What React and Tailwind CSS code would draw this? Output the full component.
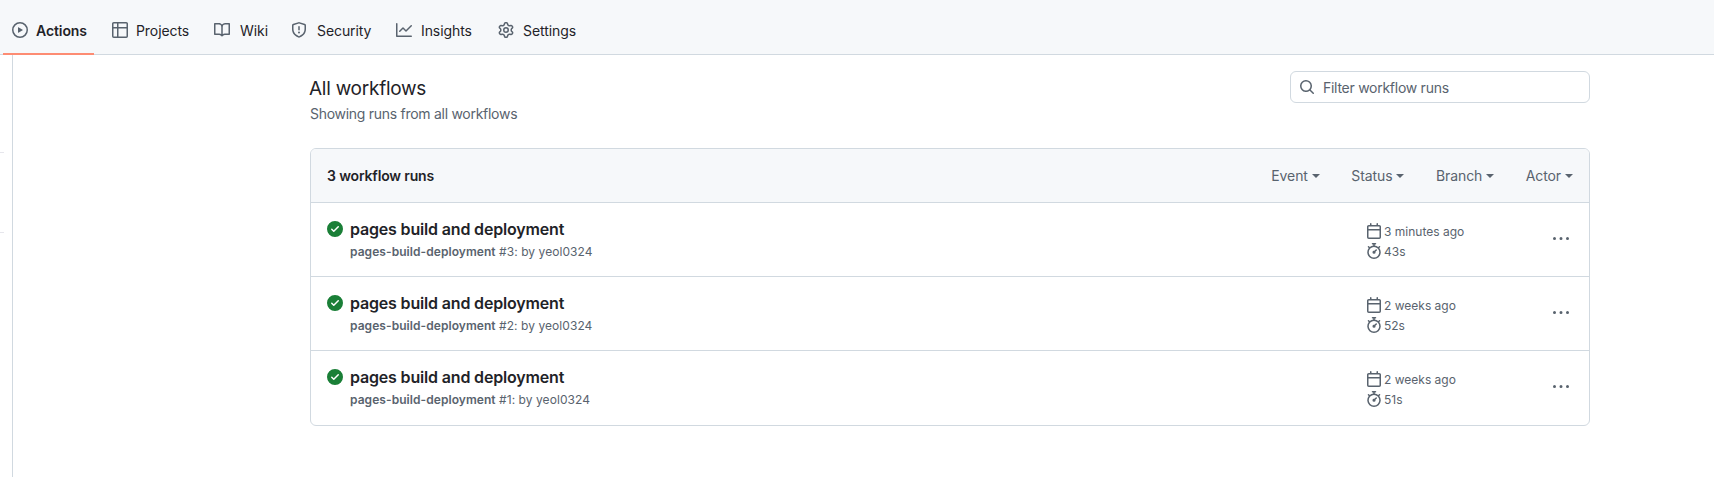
const paths = {
  play: 'M8 0a8 8 0 1 1 0 16A8 8 0 0 1 8 0ZM1.5 8a6.5 6.5 0 1 0 13 0 6.5 6.5 0 0 0-13 0Zm4.879-2.773 4.264 2.559a.25.25 0 0 1 0 .428l-4.264 2.559A.25.25 0 0 1 6 10.559V5.442a.25.25 0 0 1 .379-.215Z',
  table: 'M0 1.75C0 .784.784 0 1.75 0h12.5C15.216 0 16 .784 16 1.75v12.5A1.75 1.75 0 0 1 14.25 16H1.75A1.75 1.75 0 0 1 0 14.25ZM6.5 6.5v8h7.75a.25.25 0 0 0 .25-.25V6.5Zm8-1.5V1.75a.25.25 0 0 0-.25-.25H6.5V5Zm-13 1.5v7.75c0 .138.112.25.25.25H5v-8ZM5 5V1.5H1.75a.25.25 0 0 0-.25.25V5Z',
  book: 'M0 1.75A.75.75 0 0 1 .75 1h4.253c1.227 0 2.317.59 3 1.501A3.743 3.743 0 0 1 11.006 1h4.245a.75.75 0 0 1 .75.75v10.5a.75.75 0 0 1-.75.75h-4.507a2.25 2.25 0 0 0-1.591.659l-.622.621a.75.75 0 0 1-1.06 0l-.622-.621A2.25 2.25 0 0 0 5.258 13H.75a.75.75 0 0 1-.75-.75Zm7.251 10.324.004-5.073-.002-2.253A2.25 2.25 0 0 0 5.003 2.5H1.5v9h3.757a3.75 3.75 0 0 1 1.994.574ZM8.755 4.75l-.004 7.322a3.752 3.752 0 0 1 1.992-.572H14.5v-9h-3.495a2.25 2.25 0 0 0-2.25 2.25Z',
  shield: 'M7.467.133a1.748 1.748 0 0 1 1.066 0l5.25 1.68A1.75 1.75 0 0 1 15 3.48V7c0 1.566-.32 3.182-1.303 4.682-.983 1.498-2.585 2.813-5.032 3.855a1.697 1.697 0 0 1-1.33 0c-2.447-1.042-4.049-2.357-5.032-3.855C1.32 10.182 1 8.566 1 7V3.48a1.75 1.75 0 0 1 1.217-1.667Zm.61 1.429a.25.25 0 0 0-.153 0l-5.25 1.68a.25.25 0 0 0-.174.238V7c0 1.358.275 2.666 1.057 3.86.784 1.194 2.121 2.34 4.366 3.297a.196.196 0 0 0 .154 0c2.245-.956 3.582-2.104 4.366-3.298C13.225 9.666 13.5 8.36 13.5 7V3.48a.251.251 0 0 0-.174-.237l-5.25-1.68ZM8.75 4.75v3a.75.75 0 0 1-1.5 0v-3a.75.75 0 0 1 1.5 0ZM9 10.5a1 1 0 1 1-2 0 1 1 0 0 1 2 0Z',
  graph: 'M1.5 1.75V13.5h13.75a.75.75 0 0 1 0 1.5H.75a.75.75 0 0 1-.75-.75V1.75a.75.75 0 0 1 1.5 0Zm14.28 2.53-5.25 5.25a.75.75 0 0 1-1.06 0L7 7.06 4.28 9.78a.751.751 0 0 1-1.042-.018.751.751 0 0 1-.018-1.042l3.25-3.25a.75.75 0 0 1 1.06 0L10 7.94l4.72-4.72a.751.751 0 0 1 1.042.018.751.751 0 0 1 .018 1.042Z',
  gear: 'M8 0a8.2 8.2 0 0 1 .701.031C9.444.095 9.99.645 10.16 1.29l.288 1.107c.018.066.079.158.212.224.231.114.454.243.668.386.123.082.233.09.299.071l1.103-.303c.644-.176 1.392.021 1.82.63.27.385.506.792.704 1.218.315.675.111 1.422-.364 1.891l-.814.806c-.049.048-.098.147-.088.294.016.257.016.515 0 .772-.01.147.038.246.088.294l.814.806c.475.469.679 1.216.364 1.891a7.977 7.977 0 0 1-.704 1.217c-.428.61-1.176.807-1.82.63l-1.102-.302c-.067-.019-.177-.011-.3.071a5.909 5.909 0 0 1-.668.386c-.133.066-.194.158-.211.224l-.29 1.106c-.168.646-.715 1.196-1.458 1.26a8.006 8.006 0 0 1-1.402 0c-.743-.064-1.289-.614-1.458-1.26l-.289-1.106c-.018-.066-.079-.158-.212-.224a5.738 5.738 0 0 1-.668-.386c-.123-.082-.233-.09-.299-.071l-1.103.303c-.644.176-1.392-.021-1.82-.63a8.12 8.12 0 0 1-.704-1.218c-.315-.675-.111-1.422.363-1.891l.815-.806c.05-.048.098-.147.088-.294a6.214 6.214 0 0 1 0-.772c.01-.147-.038-.246-.088-.294l-.815-.806C.635 6.045.431 5.298.746 4.623a7.92 7.92 0 0 1 .704-1.217c.428-.61 1.176-.807 1.82-.63l1.102.302c.067.019.177.011.3-.071.214-.143.437-.272.668-.386.133-.066.194-.158.211-.224l.29-1.106C6.009.645 6.556.095 7.299.03 7.53.01 7.764 0 8 0Zm-.571 1.525c-.036.003-.108.036-.137.146l-.289 1.105c-.147.561-.549.967-.998 1.189-.173.086-.34.183-.5.29-.417.278-.97.423-1.529.27l-1.103-.303c-.109-.03-.175.016-.195.045-.22.312-.412.644-.573.99-.014.031-.021.11.059.19l.815.806c.411.406.562.957.53 1.456a4.709 4.709 0 0 0 0 .582c.032.499-.119 1.05-.53 1.456l-.815.806c-.081.08-.073.159-.059.19.162.346.353.677.573.989.02.03.085.076.195.046l1.102-.303c.56-.153 1.113-.008 1.53.27.161.107.328.204.501.29.447.222.85.629.997 1.189l.289 1.105c.029.109.101.143.137.146a6.6 6.6 0 0 0 1.142 0c.036-.003.108-.036.137-.146l.289-1.105c.147-.561.549-.967.998-1.189.173-.086.34-.183.5-.29.417-.278.97-.423 1.529-.27l1.103.303c.109.029.175-.016.195-.045.22-.313.411-.644.573-.99.014-.031.021-.11-.059-.19l-.815-.806c-.411-.406-.562-.957-.53-1.456a4.709 4.709 0 0 0 0-.582c-.032-.499.119-1.05.53-1.456l.815-.806c.081-.08.073-.159.059-.19a6.464 6.464 0 0 0-.573-.989c-.02-.03-.085-.076-.195-.046l-1.102.303c-.56.153-1.113.008-1.53-.27a4.44 4.44 0 0 0-.501-.29c-.447-.222-.85-.629-.997-1.189l-.289-1.105c-.029-.11-.101-.143-.137-.146a6.6 6.6 0 0 0-1.142 0ZM11 8a3 3 0 1 1-6 0 3 3 0 0 1 6 0ZM9.5 8a1.5 1.5 0 1 0-3.001.001A1.5 1.5 0 0 0 9.5 8Z',
  search: 'M10.68 11.74a6 6 0 0 1-7.922-8.982 6 6 0 0 1 8.982 7.922l3.04 3.04a.749.749 0 0 1-.326 1.275.749.749 0 0 1-.734-.215ZM11.5 7a4.499 4.499 0 1 0-8.997 0A4.499 4.499 0 0 0 11.5 7Z',
  check: 'M8 16A8 8 0 1 1 8 0a8 8 0 0 1 0 16Zm3.78-9.72a.751.751 0 0 0-.018-1.042.751.751 0 0 0-1.042-.018L6.75 9.19 5.28 7.72a.751.751 0 0 0-1.042.018.751.751 0 0 0-.018 1.042l2 2a.75.75 0 0 0 1.06 0Z',
  calendar: 'M4.75 0a.75.75 0 0 1 .75.75V2h5V.75a.75.75 0 0 1 1.5 0V2h1.25c.966 0 1.75.784 1.75 1.75v10.5A1.75 1.75 0 0 1 13.25 16H2.75A1.75 1.75 0 0 1 1 14.25V3.75C1 2.784 1.784 2 2.75 2H4V.75A.75.75 0 0 1 4.75 0ZM2.5 7.5v6.75c0 .138.112.25.25.25h10.5a.25.25 0 0 0 .25-.25V7.5Zm10.75-4H2.75a.25.25 0 0 0-.25.25V6h11V3.75a.25.25 0 0 0-.25-.25Z',
  stopwatch: 'M5.75.75A.75.75 0 0 1 6.5 0h3a.75.75 0 0 1 0 1.5h-.75v1l-.001.041a6.724 6.724 0 0 1 3.464 1.435l.007-.006.75-.75a.749.749 0 0 1 1.275.326.749.749 0 0 1-.215.734l-.75.75-.006.007a6.75 6.75 0 1 1-10.548 0L2.72 5.03l-.75-.75a.751.751 0 0 1 .018-1.042.751.751 0 0 1 1.042-.018l.75.75.007.006A6.72 6.72 0 0 1 7.25 2.541V1.5H6.5a.75.75 0 0 1-.75-.75ZM8 14.5a5.25 5.25 0 1 0-.001-10.501A5.25 5.25 0 0 0 8 14.5Zm.389-6.7 1.33-1.33a.75.75 0 1 1 1.061 1.06L9.45 8.861A1.503 1.503 0 0 1 8 10.75a1.499 1.499 0 1 1 .389-2.95Z',
  kebab: 'M8 9a1.5 1.5 0 1 0 0-3 1.5 1.5 0 0 0 0 3ZM1.5 9a1.5 1.5 0 1 0 0-3 1.5 1.5 0 0 0 0 3Zm13 0a1.5 1.5 0 1 0 0-3 1.5 1.5 0 0 0 0 3Z',
};

function Octicon({ name, className = '' }) {
  return (
    <svg viewBox="0 0 16 16" fill="currentColor" className={`shrink-0 ${className}`}>
      <path d={paths[name]} />
    </svg>
  );
}

const tabs = [
  { label: 'Actions', icon: 'play', active: true, width: 'w-[91px] mr-[9px] gap-[8px]' },
  { label: 'Projects', icon: 'table', width: 'w-[102px] gap-[8px]' },
  { label: 'Wiki', icon: 'book', width: 'w-[77px] gap-[10px]' },
  { label: 'Security', icon: 'shield', width: 'w-[105px] gap-[10px]' },
  { label: 'Insights', icon: 'graph', width: 'w-[102px] gap-[9px]' },
  { label: 'Settings', icon: 'gear', width: 'w-[100px] gap-[9px]' },
];

const runs = [
  { id: '#3', ago: '3 minutes ago', took: '43s', height: 'h-[74px]' },
  { id: '#2', ago: '2 weeks ago', took: '52s', height: 'h-[74px]' },
  { id: '#1', ago: '2 weeks ago', took: '51s', height: 'h-[75px]' },
];

function Filter({ label }) {
  return (
    <span className="flex items-center text-[14px] tracking-[-0.1px] text-[#59636e]">
      {label}
      <span className="ml-[4px] mt-[1px] border-x-[4px] border-t-[4px] border-x-transparent border-t-[#59636e]" />
    </span>
  );
}

function RunRow({ run }) {
  return (
    <div className={`flex border-t border-[#d1d9e0] ${run.height}`}>
      <Octicon name="check" className="ml-[16px] mt-[18px] h-[16px] w-[16px] text-[#1a7f37]" />
      <div className="ml-[7px] mt-[14px] flex-1">
        <div className="text-[16px] leading-[24px] font-semibold tracking-[-0.17px] text-[#1f2328]">pages build and deployment</div>
        <div className="mt-[2px] text-[12px] leading-[18px] tracking-[0.06px] text-[#59636e]">
          <span className="font-semibold">pages-build-deployment</span> {run.id}: by yeol0324
        </div>
      </div>
      <div className="mt-[19px] w-[187px] text-[12px] leading-[20px] text-[#59636e]">
        <div className="flex items-center gap-[2px]">
          <Octicon name="calendar" className="-mt-[2px] h-[16px] w-[16px]" />
          {run.ago}
        </div>
        <div className="flex items-center gap-[2px]">
          <Octicon name="stopwatch" className="-mt-[2px] h-[16px] w-[16px]" />
          {run.took}
        </div>
      </div>
      <Octicon name="kebab" className="mr-[20px] mt-[28px] h-[16px] w-[16px] text-[#59636e]" />
    </div>
  );
}

export default function App() {
  return (
    <div className="min-h-[477px] bg-white font-['Inter',sans-serif] antialiased">
      <nav className="flex h-[55px] items-end border-b border-[#d1d9e0] bg-[#f6f8fa] pl-[3px]">
        {tabs.map((tab) => (
          <div
            key={tab.label}
            className={`-mb-px flex h-[46px] items-center border-b-2 pb-[2px] pl-[9px] text-[14px] tracking-[-0.08px] text-[#1f2328] ${tab.width} ${tab.active ? 'border-[#fd8c73] font-semibold' : 'border-transparent'}`}
          >
            <Octicon name={tab.icon} className="h-[16px] w-[16px] text-[#59636e]" />
            {tab.label}
          </div>
        ))}
      </nav>

      <div className="flex">
        <div className="w-[4px]">
          <div className="mt-[97px] h-px bg-[#e6e6ec]" />
          <div className="mt-[79px] h-px bg-[#e6e6ec]" />
        </div>
        <div className="ml-[8px] h-[422px] w-px bg-[#d1d9e0]" />
        <main className="ml-[297px] w-[1280px]">
          <div className="flex h-[93px] justify-between pt-[16px]">
            <div className="-ml-px">
              <h1 className="pt-[4px] text-[19px] leading-[28px] font-normal tracking-[-0.25px] text-[#1f2328]">All workflows</h1>
              <p className="ml-px text-[14px] leading-[21px] tracking-[-0.28px] text-[#59636e]">Showing runs from all workflows</p>
            </div>
            <div className="flex h-[32px] w-[300px] items-center rounded-[6px] border border-[#d1d9e0] pl-[8px] text-[14px] tracking-[-0.27px] text-[#59636e]">
              <Octicon name="search" className="h-[16px] w-[16px]" />
              <span className="ml-[8px]">Filter workflow runs</span>
            </div>
          </div>

          <section className="overflow-hidden rounded-[6px] border border-[#d1d9e0]">
            <header className="flex h-[53px] items-center justify-between bg-[#f6f8fa] px-[16px]">
              <span className="text-[14px] font-semibold tracking-[-0.15px] text-[#1f2328]">3 workflow runs</span>
              <div className="flex gap-[31.5px]">
                <Filter label="Event" />
                <Filter label="Status" />
                <Filter label="Branch" />
                <Filter label="Actor" />
              </div>
            </header>
            {runs.map((run) => (
              <RunRow key={run.id} run={run} />
            ))}
          </section>
        </main>
      </div>
    </div>
  );
}
